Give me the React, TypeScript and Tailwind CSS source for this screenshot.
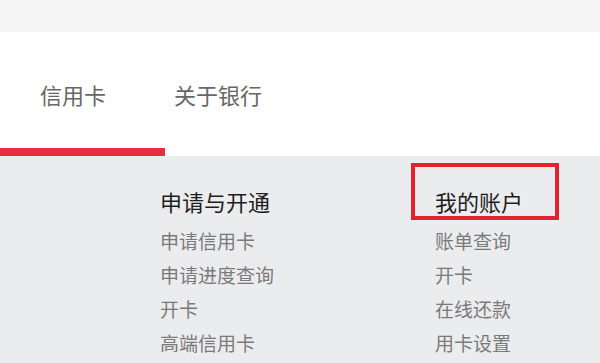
const columns = [
  { title: "申请与开通", items: ["申请信用卡", "申请进度查询", "开卡", "高端信用卡"], marked: false },
  { title: "我的账户", items: ["账单查询", "开卡", "在线还款", "用卡设置"], marked: true },
];

const tabs = [
  { label: "信用卡", active: true },
  { label: "关于银行", active: false },
];

export default function App() {
  return (
    <div
      className="flex h-[363px] w-[600px] flex-col overflow-hidden bg-white"
      style={{ fontFamily: '"Noto Sans CJK SC", "Noto Sans", sans-serif' }}
    >
      <div className="h-[32px] shrink-0 bg-[#f5f5f5]" />

      {/* 顶部导航 */}
      <nav className="flex h-[124px] shrink-0 bg-white">
        {tabs.map((tab) => (
          <div
            key={tab.label}
            className={`flex h-full shrink-0 flex-col ${tab.active ? "w-[165px] pl-[40px]" : "pl-[9px]"}`}
          >
            <span className="whitespace-nowrap pt-[50px] text-[22px] leading-[24px] text-[#666]">
              {tab.label}
            </span>
            {tab.active && <span className="-ml-[40px] mt-auto h-[8px] w-[165px] bg-[#e62e3f]" />}
          </div>
        ))}
      </nav>

      {/* 下拉面板 */}
      <div className="flex flex-1 bg-[#ebecee] pl-[160px] pt-[28px]">
        {columns.map((col) => (
          <div key={col.title} className="flex w-[275px] shrink-0 flex-col">
            <div className="relative mb-[6px]">
              <h3 className="text-[22px] leading-[34px] font-normal text-[#1e1e1e]">{col.title}</h3>
              {col.marked && (
                <span className="pointer-events-none absolute left-[-24px] top-[-21px] h-[57px] w-[148px] border-[4px] border-[#e3212f]" />
              )}
            </div>
            {col.items.map((item) => (
              <a key={item} className="whitespace-nowrap text-[19px] leading-[34px] text-[#7a7a7a]">
                {item}
              </a>
            ))}
          </div>
        ))}
      </div>
    </div>
  );
}
